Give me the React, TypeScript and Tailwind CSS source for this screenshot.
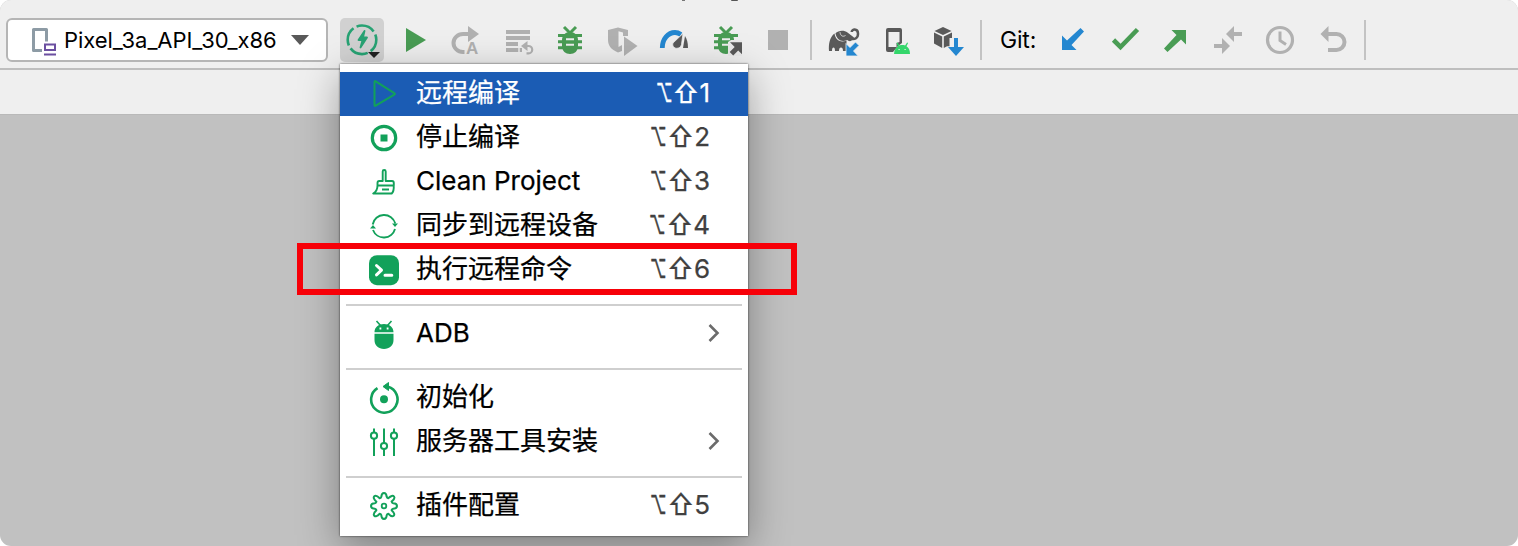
import type { ReactNode } from "react";

const GREEN = "#12a15a";
const GRAY = "#b1b1b1";
const DARK = "#595959";
const RUN = "#499c54";
const BLUE = "#2487d0";

/* Toolbar icons share one coordinate space; x is the left edge of the 52px slot. */
function Slot({ x, children }: { x: number; children: ReactNode }) {
  return (
    <svg className="h-11 w-[52px] shrink-0" viewBox={`${x} 18 52 44`} fill="none">
      {children}
    </svg>
  );
}

function Divider() {
  return <div className="mx-1.5 h-10 w-0.5 shrink-0 bg-[#c3c3c3]" />;
}

function BugBody() {
  return (
    <>
      <path d="M564 27l6 6 6-6" stroke={RUN} strokeWidth="3" />
      <path d="M558 35.500h24M558 41.700h24M558 47.800h24" stroke={RUN} strokeWidth="3" />
      <path d="M562 40c0-5 3.500-8 8-8s8 3 8 8v6c0 5-3.500 8-8 8s-8-3-8-8z" fill={RUN} />
      <path d="M566 39.200h8M566 44.800h8" stroke="#ededed" strokeWidth="2" />
    </>
  );
}

function RunIcons() {
  return (
    <>
      <Slot x={336}>
        <rect x="340" y="18" width="44" height="44" rx="5" fill="#d1d1d1" />
        <circle cx="362" cy="39.800" r="14.300" stroke="#27a273" strokeWidth="2.600" strokeDasharray="19 3.460" strokeDashoffset="6" />
        <path d="M364.500 31l-6 9h4l-2 7.500 6.500-10h-4z" fill="#27a273" stroke="#27a273" strokeWidth="1.800" strokeLinejoin="round" />
        <path d="M368 52h12l-6 6z" fill="#222" />
      </Slot>
      <Slot x={388}>
        <path d="M406 28v24l20-12z" fill={RUN} />
      </Slot>
      <Slot x={440}>
        <path d="M469 34h-6a9.500 9 0 0 0 0 18h1.500" stroke={GRAY} strokeWidth="4" />
        <path d="M468 26l11 8-11 8z" fill={GRAY} />
        <text x="466" y="54" fontFamily="Liberation Sans, sans-serif" fontWeight="700" fontSize="17" fill={GRAY}>A</text>
      </Slot>
      <Slot x={492}>
        <path d="M506 32h24M506 38h24M506 44h12M506 50h16" stroke={GRAY} strokeWidth="4" />
        <path d="M519 40.500v12" stroke="#efefef" strokeWidth="1.500" />
        <path d="M526 46h2.500a3.700 3.700 0 0 1 0 7.400h-2" stroke={GRAY} strokeWidth="2.200" />
        <path d="M521 46l6.500-5v10z" fill={GRAY} />
      </Slot>
      <Slot x={544}>
        <BugBody />
      </Slot>
      <Slot x={596}>
        <path d="M608 30l10-2.500L628 30v6h-5v-3.500l-4.500-1.200V47l3.500-2v6l-4 1.500c-7-3-10-7-10-13z" fill={GRAY} />
        <path d="M624 36.500v19.500l13.500-10z" fill={GRAY} />
      </Slot>
      <Slot x={648}>
        <path d="M662.300 48c0-9 5.700-15.500 12.700-15.500 2 0 4 .7 6 2" stroke={BLUE} strokeWidth="4.800" />
        <path d="M683 33.500l-1.500 11c-.6 2.500-2.500 3.800-4.700 3.800-3 0-4.800-2.700-3.800-5.300z" fill={DARK} stroke="#ededed" strokeWidth=".8" />
        <path d="M685 36c2 3 3 7 3 12h-5z" fill={DARK} />
      </Slot>
      <Slot x={700}>
        <g transform="translate(156 0)"><BugBody /></g>
        <path d="M728 42l3-2h11v16h-14z" fill="#eaeaea" />
        <path d="M730 42.200h12v12l-3.800-3.800-5 5-3.500-3.500 5-5z" fill={DARK} />
      </Slot>
      <Slot x={752}>
        <path d="M768 30h20v20h-20z" fill={GRAY} />
      </Slot>
    </>
  );
}

function ProjectIcons() {
  return (
    <>
      <Slot x={818}>
        <path d="M829 51c-.5-7 .5-13.500 5.500-17.500 1 6.500 5.500 9.500 12 7V51h-3.500c0-2.500-.8-3.500-2-3.500s-2 1-2 3.500h-4c0-2.500-.6-3.500-1.500-3.500s-1.500 1-1.500 3.500z" fill={DARK} />
        <path d="M835.500 33.200c2.500-2.700 8.500-3.700 12-.7l6.500 5-3 3.500c-2 .5-3-.5-4-1-5.500 2.500-10.500-.5-11.500-6.800z" fill={DARK} />
        <path d="M850 38.500c5 1.800 8.300-1 8-5.200-.3-5-6.300-4.500-6.300-1.300" stroke={DARK} strokeWidth="2.500" />
        <path d="M840 32.200c.5 3.500 2.500 5 5.500 3.300" stroke="#efefef" strokeWidth=".8" />
        <path d="M846 56V43.500l4 4 5.500-5.500 3.500 3.500-5.500 5.500 4.700 5z" fill={BLUE} stroke="#efefef" strokeWidth=".8" />
      </Slot>
      <Slot x={870}>
        <path d="M888 28h12a2 2 0 0 1 2 2v13l-4 3-5 6h-5a2 2 0 0 1-2-2V30a2 2 0 0 1 2-2z" fill={DARK} />
        <path d="M888.500 32h11v10l-3 1v4h-8z" fill="#efefef" />
        <path d="M894 54c.2-4 2-6.500 4-7.700L896.500 43l1-.5 2 3c1.800-.6 3.800-.6 5.600 0l2-3 1 .5-1.600 3.300c2 1.200 3.500 3.700 3.500 7.700z" fill="#34d66b" />
        <path d="M898.500 49.500h1.200M904.500 49.500h1.200" stroke="#efefef" strokeWidth="1" />
      </Slot>
      <Slot x={922}>
        <path d="M943 27l8.500 4-8.500 4-8.500-4z" fill={DARK} />
        <path d="M934 32.500l8.200 4V48l-8.200-4.500zM952 32.500l-8.200 4V48l3.200-1.800h2.500V38h2.500z" fill={DARK} />
        <path d="M954 38h4v9h6l-8 9-8-9h6z" fill={BLUE} />
      </Slot>
    </>
  );
}

function GitIcons() {
  return (
    <>
      <Slot x={1046}>
        <path d="M1062 50V35.500l5 5L1080.500 28l3.500 3.500L1071.500 45l5 5z" fill={BLUE} />
      </Slot>
      <Slot x={1098}>
        <path d="M1113.500 40l7 7L1137.500 29.500" stroke={RUN} strokeWidth="4.600" />
      </Slot>
      <Slot x={1150}>
        <path d="M1171.500 30H1186v14.500l-5-5L1167.500 52l-3.500-3.500L1176.500 35z" fill={RUN} />
      </Slot>
      <Slot x={1202}>
        <path d="M1214 46h9M1233 34h9" stroke={GRAY} strokeWidth="4" />
        <path d="M1222 38v16l8-8zM1234 26v16l-8-8z" fill={GRAY} />
      </Slot>
      <Slot x={1254}>
        <circle cx="1280" cy="40" r="12.500" stroke={GRAY} strokeWidth="3.200" />
        <path d="M1280 31.500v9l6 4" stroke={GRAY} strokeWidth="3" />
      </Slot>
      <Slot x={1306}>
        <path d="M1327 34h9.500a8 8 0 0 1 0 16H1328" stroke={GRAY} strokeWidth="4" />
        <path d="M1328.500 26v16l-8-8z" fill={GRAY} />
      </Slot>
    </>
  );
}

/* Menu icons are drawn on a 32px grid. */
const icons: Record<string, ReactNode> = {
  play: <path d="M6.500 4.500v22.500q0 1.400 1.200.700L26.300 16.600q1.200-.7 0-1.400L7.700 3.300q-1.200-.7-1.200.7z" strokeWidth="2" />,
  stop: (
    <>
      <circle cx="16" cy="16" r="11.700" strokeWidth="3.200" />
      <path d="M12.500 12.500h7v7h-7z" fill={GREEN} stroke="none" />
    </>
  ),
  clean: (
    <path d="M14.700 15V5.500q0-1.500 1.500-1.500t1.500 1.500V15h6.300q1.800 0 1.800 2v2.500H9.500V17q0-2 1.700-2zM9.500 19.500q0 5.500-4.300 8h18.500q2.500-2.500 2-8M14 23.500h7" strokeWidth="1.900" />
  ),
  sync: (
    <>
      <path d="M4.700 14.500A11.600 11.600 0 0 1 27.300 13.500M27 19A11.600 11.600 0 0 1 5 20" strokeWidth="1.900" />
      <path d="M24 13.500h6l-3 3.500zM2 18.500h6l-3-3.500z" fill={GREEN} stroke="none" />
    </>
  ),
  terminal: (
    <>
      <rect x="1" y="1.200" width="30" height="30" rx="8" fill={GREEN} stroke="none" />
      <path d="M8.500 11.500l5 4.700-5 4.700M17 21.200h6.800" stroke="#fff" strokeWidth="3" strokeLinecap="round" />
    </>
  ),
  android: (
    <>
      <path d="M6.500 14.200c0-5 4-8.200 9.500-8.200s9.500 3.200 9.500 8.200zM6.500 15.800h19V22c0 5.500-4 9-9.500 9s-9.500-3.500-9.500-9z" fill={GREEN} stroke="none" />
      <path d="M8.500 3l4 4.500M23.500 3l-4 4.500" strokeWidth="1.600" />
      <path d="M11.500 10.500h1.800M18.700 10.500h1.800" stroke="#fff" strokeWidth="1.800" />
    </>
  ),
  init: (
    <>
      <path d="M9.500 6.200A13.200 13.200 0 1 0 20 4.800" strokeWidth="2.600" />
      <path d="M15 4.500L20.500.500v8z" fill={GREEN} stroke={GREEN} strokeWidth="1" />
      <circle cx="16" cy="17.300" r="4" fill={GREEN} stroke="none" />
    </>
  ),
  sliders: (
    <>
      <path d="M6 2.500v4M6 13v17M16 2.500V17M16 23v7M26 2.500v4M26 13v17" strokeWidth="2" />
      <circle cx="6" cy="9.700" r="3.100" strokeWidth="2" />
      <circle cx="16" cy="20" r="3.100" strokeWidth="2" />
      <circle cx="26" cy="9.700" r="3.100" strokeWidth="2" />
    </>
  ),
  gear: (
    <>
      <path d="M13.300 6.800Q13.600 3 16 3T18.700 6.800Q19 8 20.200 8.200 24.500 4.500 26 6.500T23.600 11.600Q24 13.200 25.200 13.300 29 13.500 29 16T25.200 18.700Q23.900 18.900 23.600 20.300 27.500 24 25.700 25.700T20.300 23.700Q19 24 18.700 25.200 18.500 29 16 29T13.300 25.200Q13.100 24 11.700 23.700 8 27.500 6.300 25.700T8.400 20.300Q8.100 18.900 6.800 18.700 3 18.500 3 16T6.800 13.300Q8 13.100 8.400 11.700 4.500 8 6.300 6.300T11.700 8.300Q13.100 8 13.300 6.800z" strokeWidth="2" />
      <circle cx="16" cy="16" r="2.300" strokeWidth="1.800" />
    </>
  ),
};

type Item = { icon: string; label: string; digit?: string; sub?: boolean; active?: boolean };

const groups: Item[][] = [
  [
    { icon: "play", label: "远程编译", digit: "1", active: true },
    { icon: "stop", label: "停止编译", digit: "2" },
    { icon: "clean", label: "Clean Project", digit: "3" },
    { icon: "sync", label: "同步到远程设备", digit: "4" },
    { icon: "terminal", label: "执行远程命令", digit: "6" },
  ],
  [{ icon: "android", label: "ADB", sub: true }],
  [
    { icon: "init", label: "初始化" },
    { icon: "sliders", label: "服务器工具安装", sub: true },
  ],
  [{ icon: "gear", label: "插件配置", digit: "5" }],
];

function MenuRow({ item }: { item: Item }) {
  return (
    <div className={`flex h-11 items-center pb-0.5 pl-7 pr-[38px] ${item.active ? "bg-[#1b5cb4] text-white" : "text-black"}`}>
      <svg className="mt-0.5 size-8 shrink-0" viewBox="0 0 32 32" fill="none" stroke={GREEN} strokeLinejoin="round">
        {icons[item.icon]}
      </svg>
      <span className="ml-4 flex-1 whitespace-nowrap text-[26px] leading-[42px] [-webkit-text-stroke:0.25px]">{item.label}</span>
      {item.digit && (
        <span className={`flex whitespace-nowrap text-[26px] leading-[42px] [-webkit-text-stroke:0.25px] ${item.active ? "text-white" : "text-[#404040]"}`}>
          <span className="w-[17px]">
            <span className="inline-block origin-left scale-x-[0.62] [-webkit-text-stroke:0.6px]">⌥</span>
          </span>
          <span className="inline-block scale-y-[1.12]">⇧</span>
          <span>{item.digit}</span>
        </span>
      )}
      {item.sub && (
        <svg className="-mr-3 h-5 w-4" viewBox="0 0 16 20" fill="none" stroke="#6b6b6b" strokeWidth="2.600">
          <path d="M3.500 2l8 8-8 8" />
        </svg>
      )}
    </div>
  );
}

export default function App() {
  return (
    <div className="h-[546px] w-[1518px] bg-white font-[Inter,'Noto_Sans_CJK_SC',sans-serif]">
      <div className="relative flex h-full flex-col overflow-hidden rounded-[11px] bg-[#c1c1c1]">
        <header className="flex h-[70px] shrink-0 items-center border-b-2 border-[#bebebe] bg-[#efefef] pl-1.5 pt-3">
          <div className="flex h-11 w-[322px] shrink-0 items-center rounded-md border-2 border-[#b5b5b5] bg-white">
            <svg className="ml-[22px] h-8 w-8 shrink-0" viewBox="30 24 32 32" fill="none">
              <path d="M42 50.500h-8.500V29.500h13v12" stroke="#8d9ba5" strokeWidth="3" strokeLinejoin="round" />
              <path d="M45 44.500h10v5.500H45zM44 54.500h12" stroke="#6b4fa0" strokeWidth="2" />
            </svg>
            <span className="w-[218px] whitespace-nowrap pl-0.5 text-[22px] tracking-[-0.08px] text-black">Pixel_3a_API_30_x86</span>
            <svg className="ml-[11px] h-2.5 w-[18px]" viewBox="0 0 18 10"><path d="M0 0h18L9 10z" fill="#595959" /></svg>
          </div>
          <div className="flex items-center pl-2">
            <RunIcons />
            <Divider />
            <ProjectIcons />
            <Divider />
            <span className="w-[58px] whitespace-nowrap pl-3 text-[23px] tracking-[-0.2px] text-black">Git:</span>
            <GitIcons />
            <Divider />
          </div>
        </header>
        <div className="h-[45px] shrink-0 border-b border-[#b9b9b9] bg-[#efefef]" />
        <div className="absolute left-[682px] top-0 h-px w-[3px] bg-[#777]" />
        <div className="absolute left-[731px] top-0 h-px w-[7px] rounded-b bg-[#555]" />

        <nav className="absolute left-[340px] top-16 w-[408px] bg-white py-2 shadow-[0_0_2px_rgba(0,0,0,0.7),0_12px_38px_rgba(0,0,0,0.35)]">
          {groups.map((group, i) => (
            <div key={i}>
              {i > 0 && <div className="mx-1.5 h-5 pt-3"><div className="h-0.5 bg-[#cfcfcf]" /></div>}
              {group.map((item) => <MenuRow key={item.label} item={item} />)}
            </div>
          ))}
        </nav>
        <div className="absolute left-[297px] top-[243px] h-[52px] w-[500px] border-[6px] border-[#f70008]" />
      </div>
    </div>
  );
}
